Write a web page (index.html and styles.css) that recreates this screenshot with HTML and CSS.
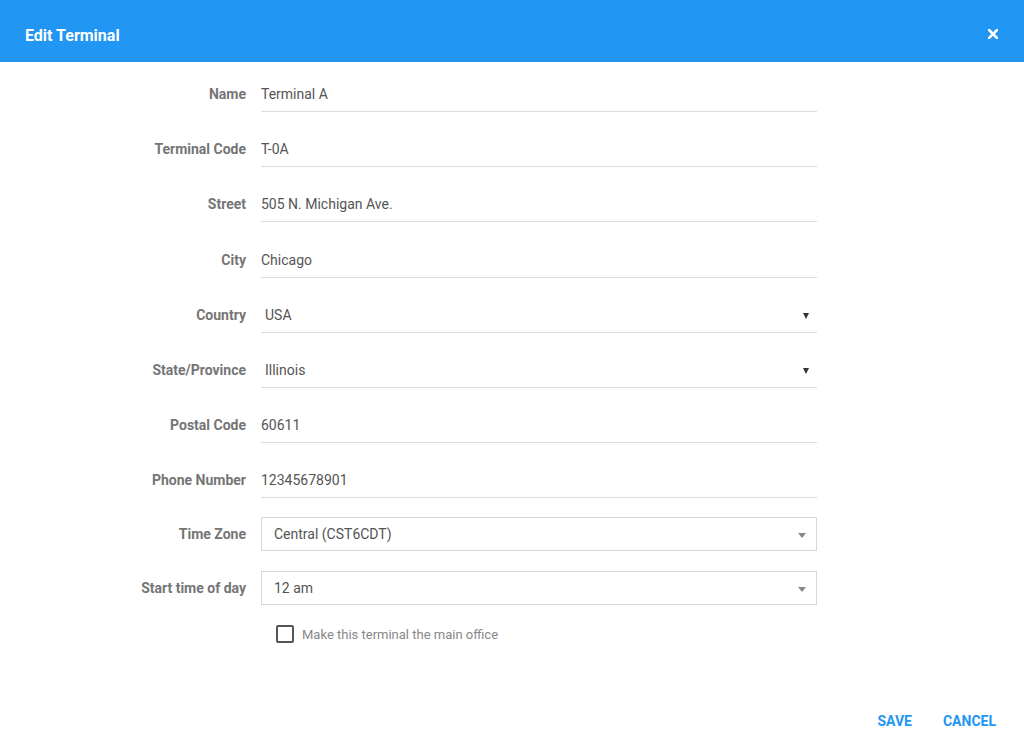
FILE: index.html
```html
<!DOCTYPE html>
<html lang="en">
<head>
    <meta charset="UTF-8">
    <title>Edit Terminal</title>
    <link rel="stylesheet" href="styles.css">
</head>
<body>
    <div class="dialog">
        <div class="dialog-header">
            <span class="dialog-title">Edit Terminal</span>
            <span class="close">
                <svg width="10" height="10" viewBox="0 0 10 10"><path d="M1 1 L9 9 M9 1 L1 9" stroke="#fff" stroke-width="2.6" stroke-linecap="square"/></svg>
            </span>
        </div>
        <div class="dialog-body">
            <div class="row">
                <label>Name</label>
                <div class="field">Terminal A</div>
            </div>
            <div class="row">
                <label>Terminal Code</label>
                <div class="field">T-0A</div>
            </div>
            <div class="row wide">
                <label>Street</label>
                <div class="field">505 N. Michigan Ave.</div>
            </div>
            <div class="row">
                <label>City</label>
                <div class="field">Chicago</div>
            </div>
            <div class="row">
                <label>Country</label>
                <div class="field select">USA<span class="arrow"></span></div>
            </div>
            <div class="row">
                <label>State/Province</label>
                <div class="field select">Illinois<span class="arrow"></span></div>
            </div>
            <div class="row">
                <label>Postal Code</label>
                <div class="field">60611</div>
            </div>
            <div class="row">
                <label>Phone Number</label>
                <div class="field">12345678901</div>
            </div>
            <div class="row boxed">
                <label>Time Zone</label>
                <div class="box">Central (CST6CDT)<span class="arrow light"></span></div>
            </div>
            <div class="row boxed">
                <label>Start time of day</label>
                <div class="box">12 am<span class="arrow light"></span></div>
            </div>
            <div class="check-row">
                <span class="checkbox"></span>
                <span class="check-text">Make this terminal the main office</span>
            </div>
        </div>
        <div class="dialog-footer">
            <span class="btn">SAVE</span>
            <span class="btn">CANCEL</span>
        </div>
    </div>
</body>
</html>
```

FILE: styles.css
```css
body {
    margin: 0;
    font-family: Roboto, "Liberation Sans", sans-serif;
    background: #fff;
}
.dialog {
    width: 1024px;
    height: 754px;
    display: flex;
    flex-direction: column;
}
.dialog-header {
    height: 62px;
    background: #2196f3;
    display: flex;
    align-items: center;
    justify-content: space-between;
    padding: 0 26px 0 25px;
    box-sizing: border-box;
}
.dialog-title {
    color: #fff;
    font-size: 16px;
    font-weight: bold;
    margin-top: 8px;
}
.close {
    display: flex;
    margin-top: 5px;
}
.dialog-body {
    padding-top: 14px;
    flex: 1;
}
.row {
    display: flex;
    align-items: center;
    margin-bottom: 19px;
}
.row.wide {
    margin-bottom: 20px;
}
.row label {
    width: 261px;
    text-align: right;
    padding-right: 15px;
    box-sizing: border-box;
    font-size: 14px;
    font-weight: bold;
    color: #757575;
}
.field {
    width: 556px;
    height: 35px;
    line-height: 36px;
    border-bottom: 1px solid #dcdcdc;
    font-size: 14px;
    color: #555;
    position: relative;
}
.field.select {
    padding-left: 4px;
    box-sizing: border-box;
    height: 36px;
}
.arrow {
    position: absolute;
    right: 8px;
    top: 16px;
    width: 0;
    height: 0;
    border-left: 3px solid transparent;
    border-right: 3px solid transparent;
    border-top: 6px solid #333;
}
.arrow.light {
    right: 10px;
    top: 15px;
    border-left-width: 4px;
    border-right-width: 4px;
    border-top: 5px solid #888;
}
.row.boxed {
    margin-bottom: 20px;
}
.box {
    width: 556px;
    height: 34px;
    line-height: 32px;
    border: 1px solid #d5d8de;
    box-sizing: border-box;
    padding-left: 12px;
    font-size: 14px;
    color: #555;
    position: relative;
}
.check-row {
    display: flex;
    align-items: center;
    padding-left: 276px;
    margin-top: 5px;
}
.checkbox {
    width: 18px;
    height: 18px;
    border: 2px solid #555;
    border-radius: 2px;
    box-sizing: border-box;
}
.check-text {
    margin-left: 8px;
    font-size: 13px;
    color: #888;
}
.dialog-footer {
    display: flex;
    justify-content: flex-end;
    gap: 31px;
    padding: 0 28px 25px 0;
}
.btn {
    font-size: 14px;
    font-weight: bold;
    color: #2196f3;
}
```
